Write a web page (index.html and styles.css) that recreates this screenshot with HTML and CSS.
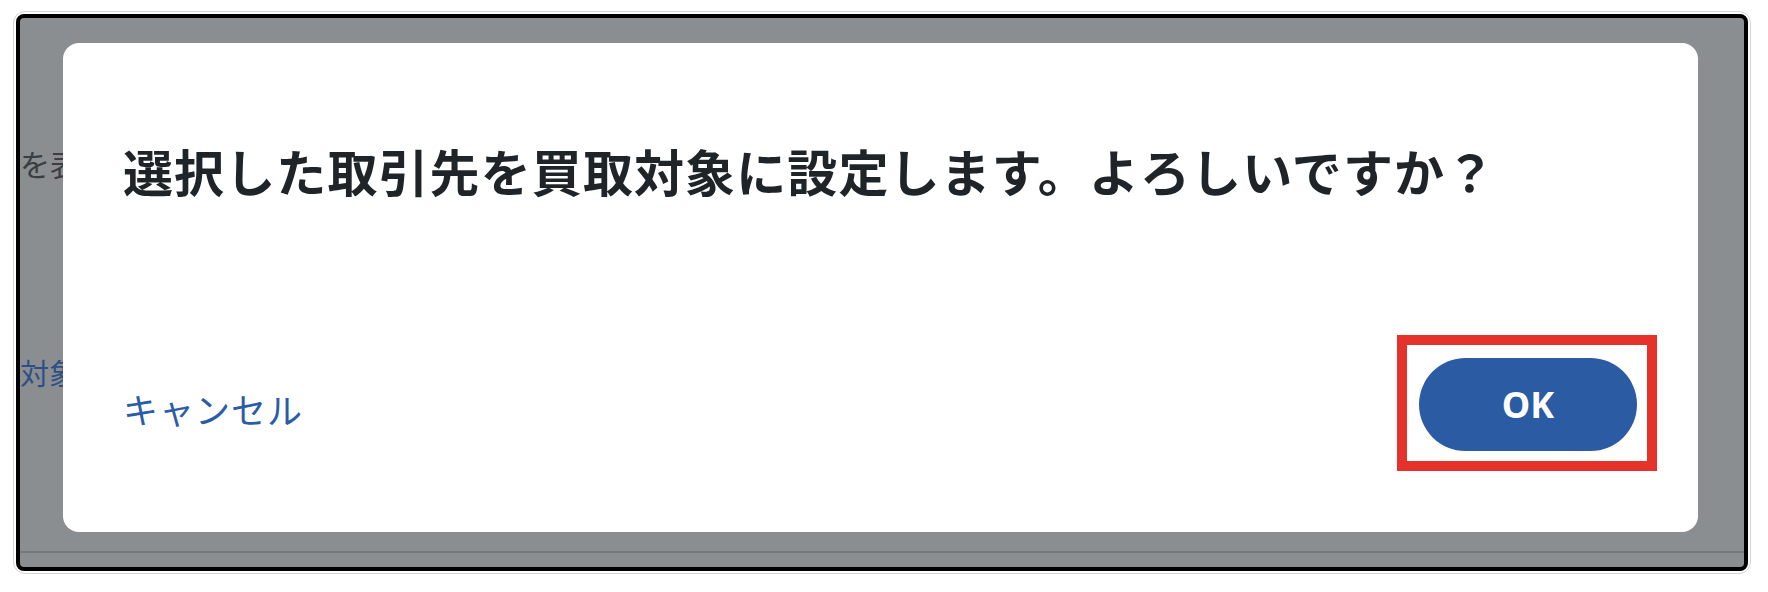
FILE: index.html
```html
<!DOCTYPE html>
<html lang="ja">
<head>
<meta charset="utf-8">
<title>確認</title>
<link rel="stylesheet" href="styles.css">
</head>
<body>
<div class="shot">
  <div class="screen">
    <div class="page">
      <p class="page-text">を表</p>
      <p class="page-link">対象</p>
      <div class="page-rule"></div>
    </div>
    <div class="dialog" role="dialog">
      <h1 class="dialog-title">選択した取引先を買取対象に設定します。よろしいですか？</h1>
      <div class="dialog-footer">
        <a class="cancel" href="#">キャンセル</a>
        <div class="ok-wrap">
          <button class="ok" type="button">OK</button>
          <span class="highlight"></span>
        </div>
      </div>
    </div>
  </div>
</div>
</body>
</html>
```

FILE: styles.css
```css
html, body {
  margin: 0;
  padding: 0;
  background: #ffffff;
  font-family: "Noto Sans CJK JP", "Noto Sans", sans-serif;
}

.shot {
  margin: 11px 0 0 13px;
  width: max-content;
  border: 1px solid #d4d4d4;
  border-radius: 12px;
  padding: 2px;
}

.screen {
  position: relative;
  width: 1724px;
  height: 549px;
  border: 4px solid #000000;
  border-radius: 8px;
  background: #8b8e91;
  overflow: hidden;
}

.page {
  padding-top: 127px;
}

.page-text {
  margin: 0;
  font-size: 30px;
  line-height: 36px;
  color: #3a3d41;
}

.page-link {
  margin: 174px 0 0;
  font-size: 29px;
  line-height: 34px;
  color: #2e4f86;
}

.page-rule {
  margin-top: 162px;
  height: 2px;
  background: #76797d;
}

.dialog {
  position: absolute;
  left: 43px;
  top: 25px;
  width: 1635px;
  height: 489px;
  box-sizing: border-box;
  padding: 97px 61px 81px 60px;
  background: #ffffff;
  border-radius: 16px;
  display: flex;
  flex-direction: column;
}

.dialog-title {
  margin: 0;
  font-size: 50px;
  line-height: 60px;
  font-weight: 700;
  letter-spacing: 1.1px;
  color: #1f2429;
  white-space: nowrap;
}

.dialog-footer {
  margin-top: auto;
  display: flex;
  justify-content: space-between;
  align-items: center;
}

.cancel {
  font-size: 35px;
  line-height: 44px;
  letter-spacing: 1px;
  color: #2b5ca6;
  text-decoration: none;
  margin-top: 8px;
}

.ok-wrap {
  position: relative;
  display: flex;
}

.ok {
  width: 218px;
  height: 93px;
  border: none;
  border-radius: 47px;
  background: #2a5ba3;
  color: #ffffff;
  font-family: "Noto Sans", "Liberation Sans", sans-serif;
  font-size: 36px;
  font-weight: 700;
  padding: 0;
}

.highlight {
  position: absolute;
  left: -22px;
  right: -20px;
  top: -23px;
  bottom: -20px;
  border: 10px solid #e5322a;
  pointer-events: none;
}
```
